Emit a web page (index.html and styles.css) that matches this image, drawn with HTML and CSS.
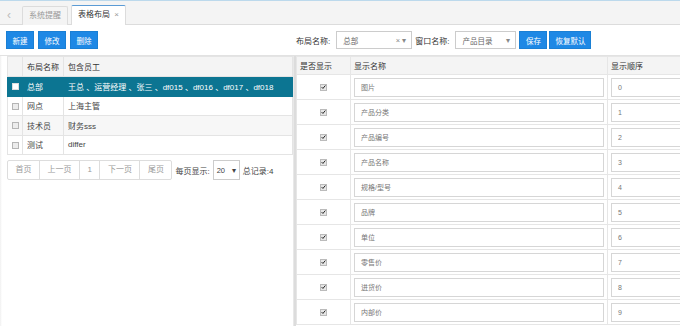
FILE: index.html
```html
<!DOCTYPE html>
<html lang="zh-CN">
<head>
  <meta charset="UTF-8">
  <title>表格布局</title>
  <link rel="stylesheet" href="styles.css">
</head>
<body>
  <div class="tabbar">
    <span class="tab-back">&lsaquo;</span>
    <div class="tab">系统提醒</div>
    <div class="tab active">表格布局 <span class="tab-close">×</span></div>
  </div>

  <div class="toolbar">
    <div class="tool-left">
      <button class="btn">新建</button>
      <button class="btn">修改</button>
      <button class="btn">删除</button>
    </div>
    <div class="tool-right">
      <label class="field-label">布局名称:</label>
      <div class="select select-layout"><span>总部</span><span class="sel-icons">× ▾</span></div>
      <label class="field-label">窗口名称:</label>
      <div class="select select-window"><span>产品目录</span><span class="sel-icons">▾</span></div>
      <button class="btn">保存</button>
      <button class="btn">恢复默认</button>
    </div>
  </div>

  <div class="main">
    <div class="left-pane">
      <table class="layout-table">
        <thead>
          <tr><th class="col-cb"></th><th class="col-name">布局名称</th><th>包含员工</th></tr>
        </thead>
        <tbody>
          <tr class="selected"><td class="col-cb"><span class="box"></span></td><td>总部</td><td>王总 、运营经理 、张三 、df015 、df016 、df017 、df018</td></tr>
          <tr><td class="col-cb"><span class="box"></span></td><td>网点</td><td>上海主管</td></tr>
          <tr class="alt"><td class="col-cb"><span class="box"></span></td><td>技术员</td><td>财务sss</td></tr>
          <tr><td class="col-cb"><span class="box"></span></td><td>测试</td><td>differ</td></tr>
        </tbody>
      </table>

      <div class="pager">
        <div class="pager-group">
          <span class="page-btn">首页</span>
          <span class="page-btn">上一页</span>
          <span class="page-btn">1</span>
          <span class="page-btn">下一页</span>
          <span class="page-btn">尾页</span>
        </div>
        <span class="pager-text">每页显示:</span>
        <div class="page-size"><span>20</span><span>▾</span></div>
        <span class="pager-text">总记录:4</span>
      </div>
    </div>

    <div class="splitter"></div>

    <div class="right-pane">
      <table class="column-table">
        <thead>
          <tr><th class="col-show">是否显示</th><th class="col-title">显示名称</th><th class="col-order">显示顺序</th></tr>
        </thead>
        <tbody id="columnRows"></tbody>
      </table>
    </div>
  </div>

  <script>
    const columns = ["图片", "产品分类", "产品编号", "产品名称", "规格/型号", "品牌", "单位", "零售价", "进货价", "内部价"];
    const tbody = document.getElementById("columnRows");

    // Build one row per column setting
    columns.forEach((name, index) => {
      const row = document.createElement("tr");
      row.innerHTML = `
        <td class="col-show"><span class="check"><svg viewBox="0 0 8 8" width="6" height="6"><path d="M1 4.2 L3.1 6.3 L7 1.6" fill="none" stroke="#222" stroke-width="1.6"/></svg></span></td>
        <td class="col-title"><div class="cell-input">${name}</div></td>
        <td class="col-order"><div class="cell-input">${index}</div></td>`;
      tbody.appendChild(row);
    });
  </script>
</body>
</html>
```

FILE: styles.css
```css
/* General Styles */
* {
  box-sizing: border-box;
}

body {
  margin: 0;
  font-family: 'Liberation Sans', 'Noto Sans CJK SC', sans-serif;
  font-size: 8px;
  color: #333;
  background: #fff;
  overflow: hidden;
  border-top: 1px solid #bcd9ec;
}

/* Tab Bar */
.tabbar {
  height: 24px;
  background: #f4f4f4;
  border-bottom: 1px solid #dcdcdc;
  display: flex;
  align-items: flex-end;
  padding-left: 7px;
}

.tab-back {
  width: 15px;
  align-self: center;
  margin-top: 5px;
  color: #bbb;
  font-size: 12px;
}

.tab {
  height: 19px;
  line-height: 18px;
  padding: 0 6px;
  margin-right: 3px;
  margin-bottom: -1px;
  border: 1px solid #dcdcdc;
  border-bottom: none;
  border-radius: 2px 2px 0 0;
  color: #999;
  background: #f4f4f4;
}

.tab.active {
  background: #fff;
  color: #333;
  border-top: 1px solid #5b9bd5;
  height: 20px;
}

.tab-close {
  color: #999;
  margin-left: 2px;
}

/* Toolbar */
.toolbar {
  height: 31px;
  display: flex;
  align-items: center;
  border-bottom: 1px solid #e2e2e2;
}

.tool-left {
  width: 296px;
  padding-left: 6px;
  display: flex;
  gap: 2px;
}

.tool-right {
  display: flex;
  align-items: center;
}

.btn {
  height: 18px;
  padding: 0 5px;
  min-width: 28px;
  border: 1px solid #1a7fd4;
  background: #1e88e5;
  color: #fff;
  font-family: inherit;
  font-size: 7.5px;
  cursor: pointer;
  margin-right: 2px;
}

.field-label {
  color: #333;
  margin-right: 6px;
}

.select {
  height: 18px;
  border: 1px solid #ccc;
  display: flex;
  align-items: center;
  justify-content: space-between;
  padding: 0 5px 0 6px;
  color: #666;
  font-size: 7.5px;
  margin-right: 3px;
}

.select-layout {
  width: 76px;
}

.select-window {
  width: 61px;
}

.sel-icons {
  color: #888;
}

/* Main area */
.main {
  display: flex;
  height: 300px;
}

.left-pane {
  width: 293px;
  padding-left: 7px;
  background: linear-gradient(to right, #f0f0f0 0, #fff 2px);
}

.left-pane > * {
  background: #fff;
}

.splitter {
  width: 3px;
  background: #dcdcdc;
  border-left: 1px solid #e8e8e8;
}

.right-pane {
  flex: 1;
  overflow: hidden;
}

/* Layout table */
.layout-table {
  width: 100%;
  border-collapse: collapse;
  border-left: 1px solid #e4e4e4;
}

.layout-table th,
.layout-table td {
  border: 1px solid #e4e4e4;
  text-align: left;
  padding: 0 4px;
  font-weight: normal;
  white-space: nowrap;
}

.layout-table th {
  height: 20px;
  background: #f4f4f4;
  color: #333;
}

.layout-table td {
  height: 19.5px;
  color: #444;
}

.layout-table .col-cb {
  width: 15px;
  padding: 0;
  text-align: center;
}

.layout-table .col-name {
  width: 41px;
}

.layout-table tr.alt td {
  background: #f7f7f7;
}

.layout-table tr.selected td {
  background: #0c7592;
  color: #fff;
  border-color: #0c7592;
}

.box {
  display: inline-block;
  width: 7px;
  height: 7px;
  border: 1px solid #b5b5b5;
  background: #ececec;
  vertical-align: middle;
}

.selected .box {
  background: #fff;
  border-color: #ddd;
}

/* Pager */
.pager {
  display: flex;
  align-items: center;
  margin-top: 5px;
}

.pager-group {
  display: flex;
  border: 1px solid #ddd;
  border-radius: 2px;
  height: 20px;
}

.page-btn {
  line-height: 18px;
  padding: 0 7.5px;
  color: #999;
  border-left: 1px solid #ddd;
}

.page-btn:first-child {
  border-left: none;
}

.pager-text {
  color: #444;
  margin: 0 3px;
}

.page-size {
  width: 27px;
  height: 20px;
  border: 1px solid #ccc;
  display: flex;
  align-items: center;
  justify-content: space-between;
  padding: 0 3px;
  font-size: 7.5px;
  color: #444;
}

/* Column table */
.column-table {
  border-collapse: collapse;
  width: 420px;
}

.column-table th,
.column-table td {
  border: 1px solid #e6e6e6;
  font-weight: normal;
  text-align: left;
}

.column-table th {
  height: 18px;
  background: #f4f4f4;
  padding: 0 3px;
}

.column-table td {
  height: 25px;
  padding: 0 3px;
}

.column-table .col-show {
  width: 54px;
  text-align: center;
}

.column-table th.col-show {
  text-align: left;
}

.column-table .col-title {
  width: 257px;
}

.check {
  display: inline-flex;
  align-items: center;
  justify-content: center;
  width: 7px;
  height: 7px;
  border: 1px solid #bbb;
  background: #e6e6e6;
  vertical-align: middle;
}

.cell-input {
  height: 19px;
  line-height: 17px;
  border: 1px solid #d6d6d6;
  padding: 0 6px;
  font-size: 7px;
  color: #777;
}
```
